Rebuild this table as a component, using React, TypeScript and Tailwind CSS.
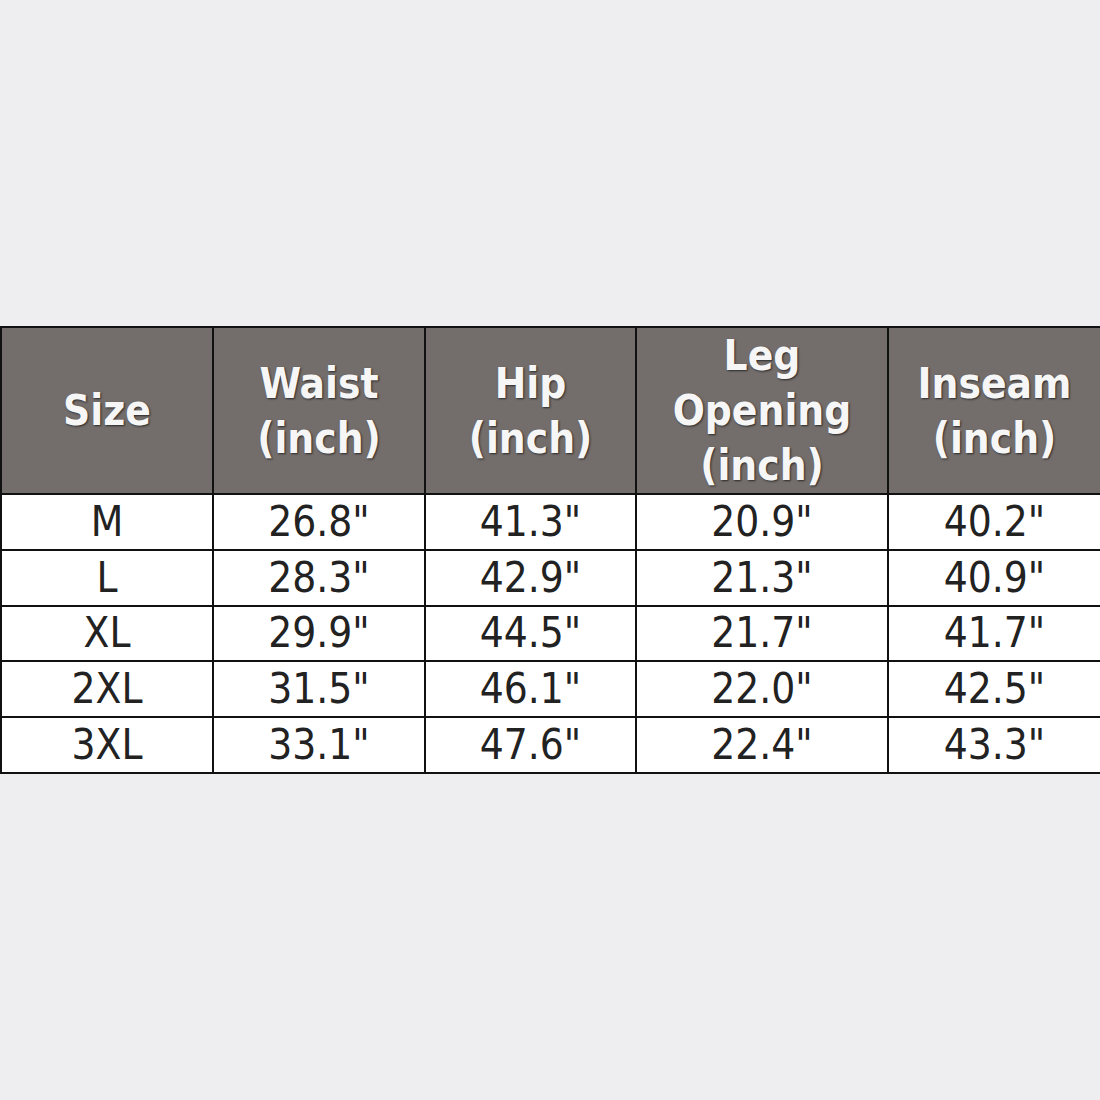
const HEADERS = [
  ['Size'],
  ['Waist', '(inch)'],
  ['Hip', '(inch)'],
  ['Leg', 'Opening', '(inch)'],
  ['Inseam', '(inch)'],
]

const ROWS = [
  ['M', '26.8"', '41.3"', '20.9"', '40.2"'],
  ['L', '28.3"', '42.9"', '21.3"', '40.9"'],
  ['XL', '29.9"', '44.5"', '21.7"', '41.7"'],
  ['2XL', '31.5"', '46.1"', '22.0"', '42.5"'],
  ['3XL', '33.1"', '47.6"', '22.4"', '43.3"'],
]

const COLS = ['w-[212px]', 'w-[212px]', 'w-[211px]', 'w-[252px]', 'w-[213px]']

export default function App() {
  return (
    <div className="min-h-[1100px] w-[1100px] bg-[#eeeef0] pt-[326px] font-['DejaVu_Sans_Condensed',sans-serif]">
      <table className="w-[1100px] table-fixed border-collapse">
        <thead>
          <tr className="h-[167px] bg-[#736d6b]">
            {HEADERS.map((lines, i) => (
              <th
                key={i}
                className={`${COLS[i]} border-2 border-[#111] p-0 text-center align-middle text-[42px] font-bold leading-[55px] text-[#f6f6f6] [text-shadow:1px_1px_2px_#2a2a2a]`}
              >
                {lines.map((l) => (
                  <div key={l}>{l}</div>
                ))}
              </th>
            ))}
          </tr>
        </thead>
        <tbody>
          {ROWS.map((row) => (
            <tr key={row[0]} className="h-[55.8px] bg-white">
              {row.map((cell, i) => (
                <td
                  key={i}
                  className="border-2 border-[#111] p-0 text-center align-middle text-[42px] leading-[50px] text-[#222]"
                >
                  {cell}
                </td>
              ))}
            </tr>
          ))}
        </tbody>
      </table>
    </div>
  )
}
